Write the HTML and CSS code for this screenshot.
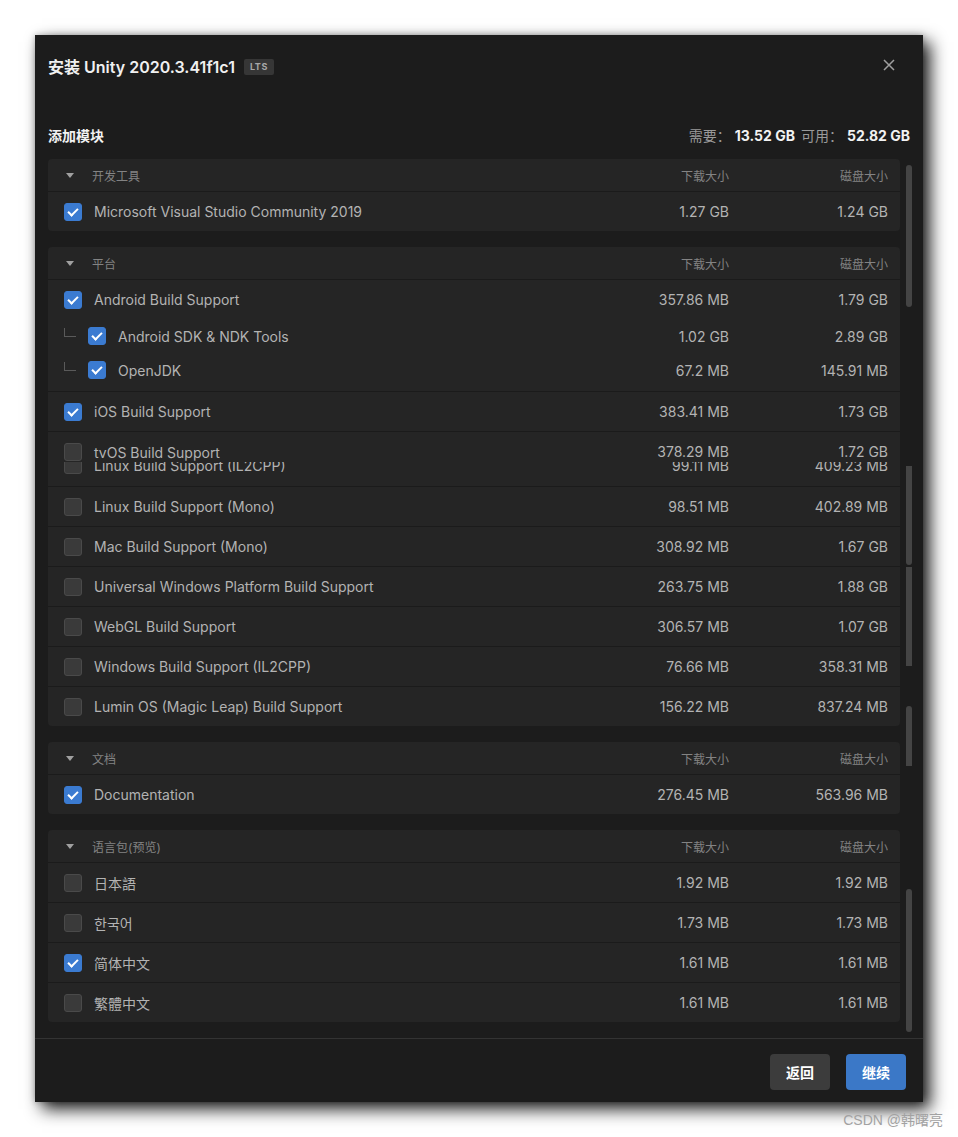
FILE: index.html
```html
<!DOCTYPE html>
<html lang="zh-CN">
<head>
<meta charset="utf-8">
<title>安装 Unity 2020.3.41f1c1</title>
<link rel="stylesheet" href="styles.css">
</head>
<body>
<div class="dialog">
  <div class="titlebar">
    <div class="title">安装 Unity 2020.3.41f1c1 <span class="badge">LTS</span></div>
    <svg class="close" width="12" height="12" viewBox="0 0 12 12"><path d="M1 1L11 11M11 1L1 11" stroke="#a0a0a0" stroke-width="1.5" fill="none"/></svg>
  </div>
  <div class="summary">
    <div class="summary-title">添加模块</div>
    <div class="summary-space"><span class="lbl">需要：</span><b>13.52 GB</b><span class="lbl lbl2">可用：</span><b>52.82 GB</b></div>
  </div>
  <div class="listarea">
    <div class="list">
      <div class="card">
        <div class="row head"><div class="name"><span class="tri"></span>开发工具</div><div class="num">下载大小</div><div class="num">磁盘大小</div></div>
        <div class="row"><div class="name"><span class="cb on"></span>Microsoft Visual Studio Community 2019</div><div class="num">1.27 GB</div><div class="num">1.24 GB</div></div>
      </div>
      <div class="card">
        <div class="row head"><div class="name"><span class="tri"></span>平台</div><div class="num">下载大小</div><div class="num">磁盘大小</div></div>
        <div class="group">
          <div class="row"><div class="name"><span class="cb on"></span>Android Build Support</div><div class="num">357.86 MB</div><div class="num">1.79 GB</div></div>
          <div class="row sub"><div class="name"><span class="conn"></span><span class="cb on"></span>Android SDK &amp; NDK Tools</div><div class="num">1.02 GB</div><div class="num">2.89 GB</div></div>
          <div class="row sub"><div class="name"><span class="conn"></span><span class="cb on"></span>OpenJDK</div><div class="num">67.2 MB</div><div class="num">145.91 MB</div></div>
        </div>
        <div class="row"><div class="name"><span class="cb on"></span>iOS Build Support</div><div class="num">383.41 MB</div><div class="num">1.73 GB</div></div>
        <div class="row clip-top"><div class="name"><span class="cb"></span>tvOS Build Support</div><div class="num">378.29 MB</div><div class="num">1.72 GB</div></div>
        <div class="clip-bottom"><div class="row"><div class="name"><span class="cb"></span>Linux Build Support (IL2CPP)</div><div class="num">99.11 MB</div><div class="num">409.23 MB</div></div></div>
        <div class="row"><div class="name"><span class="cb"></span>Linux Build Support (Mono)</div><div class="num">98.51 MB</div><div class="num">402.89 MB</div></div>
        <div class="row"><div class="name"><span class="cb"></span>Mac Build Support (Mono)</div><div class="num">308.92 MB</div><div class="num">1.67 GB</div></div>
        <div class="row"><div class="name"><span class="cb"></span>Universal Windows Platform Build Support</div><div class="num">263.75 MB</div><div class="num">1.88 GB</div></div>
        <div class="row"><div class="name"><span class="cb"></span>WebGL Build Support</div><div class="num">306.57 MB</div><div class="num">1.07 GB</div></div>
        <div class="row"><div class="name"><span class="cb"></span>Windows Build Support (IL2CPP)</div><div class="num">76.66 MB</div><div class="num">358.31 MB</div></div>
        <div class="row"><div class="name"><span class="cb"></span>Lumin OS (Magic Leap) Build Support</div><div class="num">156.22 MB</div><div class="num">837.24 MB</div></div>
      </div>
      <div class="card">
        <div class="row head"><div class="name"><span class="tri"></span>文档</div><div class="num">下载大小</div><div class="num">磁盘大小</div></div>
        <div class="row"><div class="name"><span class="cb on"></span>Documentation</div><div class="num">276.45 MB</div><div class="num">563.96 MB</div></div>
      </div>
      <div class="card">
        <div class="row head"><div class="name"><span class="tri"></span>语言包(预览)</div><div class="num">下载大小</div><div class="num">磁盘大小</div></div>
        <div class="row"><div class="name"><span class="cb"></span>日本語</div><div class="num">1.92 MB</div><div class="num">1.92 MB</div></div>
        <div class="row"><div class="name"><span class="cb"></span>한국어</div><div class="num">1.73 MB</div><div class="num">1.73 MB</div></div>
        <div class="row"><div class="name"><span class="cb on"></span>简体中文</div><div class="num">1.61 MB</div><div class="num">1.61 MB</div></div>
        <div class="row"><div class="name"><span class="cb"></span>繁體中文</div><div class="num">1.61 MB</div><div class="num">1.61 MB</div></div>
      </div>
    </div>
    <div class="scroll">
      <div class="thumb t1"></div>
      <div class="thumb t2"></div>
      <div class="thumb t3"></div>
      <div class="thumb t4"></div>
      <div class="thumb t5"></div>
    </div>
  </div>
  <div class="footer">
    <button class="btn back">返回</button>
    <button class="btn next">继续</button>
  </div>
</div>
<div class="watermark">CSDN @韩曙亮</div>
</body>
</html>
```
FILE: styles.css
```css
* { box-sizing: border-box; }
html, body { margin: 0; padding: 0; background: #ffffff; }
body {
  font-family: "Inter", "Noto Sans CJK SC", sans-serif;
  width: 958px;
  height: 1137px;
  overflow: hidden;
}
.dialog {
  margin: 35px 0 0 35px;
  width: 888px;
  height: 1067px;
  background: #1c1c1c;
  display: flex;
  flex-direction: column;
  box-shadow: 7px 7px 16px rgba(0,0,0,0.9), 0 0 6px rgba(0,0,0,0.25);
}
.titlebar {
  display: flex;
  justify-content: space-between;
  align-items: center;
  padding: 20px 28px 0 13px;
  height: 44px;
}
.title {
  font-size: 16px;
  font-weight: 600;
  color: #f0f0f0;
  line-height: 24px;
  display: flex;
  align-items: center;
}
.badge {
  margin-left: 9px;
  background: #363636;
  color: #a8a8a8;
  font-size: 9px;
  font-weight: 700;
  letter-spacing: 0.6px;
  height: 16px;
  line-height: 16px;
  padding: 0 6px;
  border-radius: 2px;
}
.close { margin-top: -4px; }
.summary {
  margin-top: 46px;
  padding: 0 13px;
  height: 20px;
  display: flex;
  justify-content: space-between;
  align-items: center;
  font-size: 14px;
}
.summary-title { color: #f2f2f2; font-weight: 700; }
.summary-space { color: #f2f2f2; }
.summary-space b { font-weight: 700; margin-left: 4px; }
.lbl { color: #9a9a9a; }
.lbl2 { margin-left: 6px; }
.listarea {
  margin-top: 14px;
  flex: 1;
  display: flex;
  padding: 0 11px 0 13px;
  gap: 6px;
  overflow: hidden;
}
.list {
  width: 852px;
  display: flex;
  flex-direction: column;
  gap: 16px;
}
.card {
  background: #252525;
  border-radius: 4px;
  overflow: hidden;
}
.row {
  display: grid;
  grid-template-columns: 1fr 160px 159px;
  align-items: center;
  height: 40px;
  padding: 0 12px 0 16px;
  border-top: 1px solid #1b1b1b;
  font-size: 14px;
  color: #b3b3b3;
}
.row.head {
  height: 32px;
  border-top: none;
  font-size: 12px;
  color: #838383;
}
.name { display: flex; align-items: center; gap: 12px; white-space: nowrap; }
.head .name { gap: 16px; }
.num { text-align: right; white-space: nowrap; }
.tri {
  width: 12px;
  height: 5px;
  display: flex;
  justify-content: center;
}
.tri::before {
  content: "";
  border-left: 4px solid transparent;
  border-right: 4px solid transparent;
  border-top: 5px solid #a0a0a0;
}
.cb {
  width: 18px;
  height: 18px;
  border-radius: 3px;
  background: #3a3a3a;
  border: 1px solid #4a4a4a;
  flex: none;
  position: relative;
}
.cb.on {
  background: #3b7bd1;
  border-color: #3b7bd1;
}
.cb.on::after {
  content: "";
  position: absolute;
  left: 5px;
  top: 2px;
  width: 4px;
  height: 8px;
  border-right: 2.5px solid #ffffff;
  border-bottom: 2.5px solid #ffffff;
  transform: rotate(45deg);
}
.group { padding-bottom: 4px; }
.group .row:first-child { height: 40px; }
.row.sub { height: 34px; border-top: none; }
.conn {
  width: 12px;
  height: 9px;
  border-left: 1px solid #5a5a5a;
  border-bottom: 1px solid #5a5a5a;
  margin-top: -8px;
  flex: none;
}
.group + .row { border-top: 1px solid #1b1b1b; }
.row.clip-top { height: 31px; align-items: start; padding-top: 11px; overflow: hidden; }
.clip-bottom { height: 24px; overflow: hidden; }
.clip-bottom .row { margin-top: -17px; border-top: none; }
.clip-bottom + .row { border-top: 1px solid #1b1b1b; }
.scroll {
  width: 6px;
  display: flex;
  flex-direction: column;
}
.thumb { width: 6px; background: #444444; flex: none; }
.t1 { margin-top: 6px; height: 142px; border-radius: 3px; }
.t2 { margin-top: 159px; height: 99px; border-radius: 0 0 3px 3px; }
.t3 { margin-top: 2px; height: 99px; }
.t4 { margin-top: 40px; height: 60px; border-radius: 3px 3px 0 0; }
.t5 { margin-top: 123px; height: 143px; border-radius: 3px; }
.footer {
  height: 64px;
  border-top: 1px solid #333333;
  display: flex;
  justify-content: flex-end;
  align-items: flex-start;
  gap: 16px;
  padding: 15px 17px 0 0;
}
.btn {
  width: 60px;
  height: 36px;
  border: none;
  border-radius: 4px;
  font-family: "Inter", "Noto Sans CJK SC", sans-serif;
  font-size: 14px;
  font-weight: 700;
  color: #ffffff;
  padding: 0;
}
.btn.back { background: #3c3c3c; }
.btn.next { background: #3b78c7; }
.watermark {
  margin-top: 8px;
  text-align: right;
  padding-right: 15px;
  font-size: 14px;
  line-height: 20px;
  color: #a2a2a2;
  font-family: "Liberation Sans", "Noto Sans CJK SC", sans-serif;
}
```
